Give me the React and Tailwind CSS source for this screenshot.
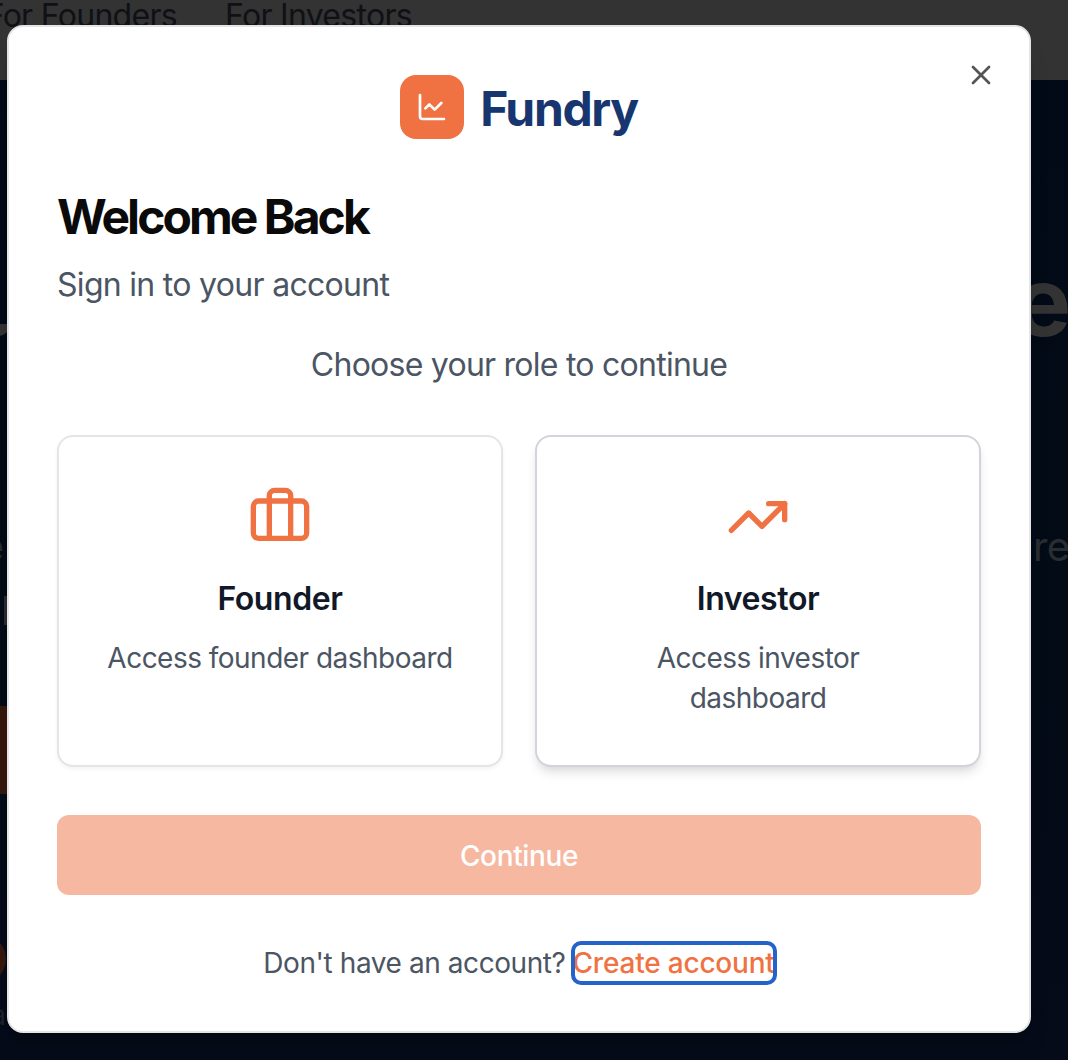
import React from "react";
import { Briefcase, ChartLine, TrendingUp, X } from "lucide-react";

function Backdrop() {
  return (
    <div aria-hidden="true" className="flex h-full flex-col overflow-hidden">
      <div className="relative h-20 shrink-0 bg-[#333333] text-[32px] leading-8 tracking-[-0.7px] text-[#0f1115]">
        <span className="absolute top-0 right-[891px] whitespace-nowrap">For Founders</span>
        <span className="absolute top-0 left-[225px] whitespace-nowrap">For Investors</span>
      </div>
      <div className="relative flex-1 overflow-hidden bg-linear-to-b from-[#030a17] via-[#030b17] to-[#050b18]">
        <span className="absolute top-[165px] left-[1014px] text-[96px] leading-[112px] font-bold text-[#333333]">e</span>
        <span className="absolute top-[244px] -left-[12px] h-[12px] w-[22px] rounded-br-full bg-[#333333]" />
        <span className="absolute top-[443px] left-[1011px] text-[40px] leading-[48px] tracking-[-0.5px] text-[#292d30]">are</span>
        <span className="absolute top-[443px] right-[1064px] text-[40px] leading-[48px] text-[#292d30]">e</span>
        <span className="absolute top-[516px] left-[4px] h-[29px] w-1 bg-[#292d30]" />
        <span className="absolute top-[626px] -left-8 h-[88px] w-20 rounded-2xl bg-[#35180d]" />
        <span className="absolute top-[855px] -left-[42px] size-12 rounded-full bg-[#35180d]" />
        <span className="absolute top-[915px] right-[1062px] text-[28px] leading-10 text-[#1c222b]">a</span>
      </div>
    </div>
  );
}

function RoleCard({ icon: Icon, title, text, className }) {
  return (
    <button
      type="button"
      className={"flex h-[332px] flex-1 flex-col items-center rounded-2xl border-2 bg-white px-12 pt-12 text-center " + className}
    >
      <Icon size={64} strokeWidth={2} className="text-[#f07243]" />
      <span className="mt-[26px] text-[32px] leading-[48px] font-semibold tracking-[-0.4px] text-[#111827]">{title}</span>
      <span className="mt-[15px] text-[28px] leading-10 tracking-[-0.52px] text-[#4b5563]">{text}</span>
    </button>
  );
}

export default function App() {
  return (
    <main className="relative h-[1060px] w-[1068px] overflow-hidden bg-[#030a17] font-['Inter',sans-serif]">
      <Backdrop />
      <div className="absolute inset-0 pt-[25px] pl-[7px]">
        <section
          role="dialog"
          className="relative flex h-[1008px] w-[1024px] flex-col rounded-2xl border-2 border-[#e5e5e5] bg-white p-12 shadow-xl"
        >
          <button type="button" aria-label="Close" className="absolute top-8 right-8 text-[#545454]">
            <X size={32} />
          </button>

          <div className="flex h-16 items-center justify-center gap-4">
            <div className="flex size-16 items-center justify-center rounded-2xl bg-[#f07243]">
              <ChartLine size={32} className="text-white" />
            </div>
            <span className="pt-1 text-[48px] leading-[64px] font-bold tracking-[-1.35px] text-[#17366f]">Fundry</span>
          </div>

          <h2 className="mt-[54px] text-[48px] leading-[48px] font-bold tracking-[-2.95px] text-[#0a0a0a]">Welcome Back</h2>
          <p className="mt-5 text-[32px] leading-[48px] tracking-[-0.7px] text-[#4b5563]">Sign in to your account</p>
          <p className="mt-8 text-center text-[32px] leading-[48px] tracking-[-0.75px] text-[#4b5563]">Choose your role to continue</p>

          <div className="mt-[46px] flex gap-8">
            <RoleCard icon={Briefcase} title="Founder" text="Access founder dashboard" className="border-[#e5e5e5] shadow-[0_2px_4px_rgba(0,0,0,0.05)]" />
            <RoleCard icon={TrendingUp} title="Investor" text="Access investor dashboard" className="border-[#d1d5db] shadow-[0_8px_12px_-2px_rgba(0,0,0,0.1),0_4px_8px_-4px_rgba(0,0,0,0.1)]" />
          </div>

          <button type="button" className="mt-12 h-20 shrink-0 rounded-xl bg-[#f7b8a1] pt-px text-[28px] font-medium tracking-[-0.35px] text-white">
            Continue
          </button>

          <p className="mt-12 flex items-center justify-center gap-[7px] text-[28px] leading-10 text-[#4b5563]">
            <span className="tracking-[-0.42px]">Don't have an account?</span>
            <a className="rounded-lg font-medium tracking-[-0.2px] text-[#f07243] outline-4 -outline-offset-2 outline-[#2463c9]">Create account</a>
          </p>
        </section>
      </div>
    </main>
  );
}
